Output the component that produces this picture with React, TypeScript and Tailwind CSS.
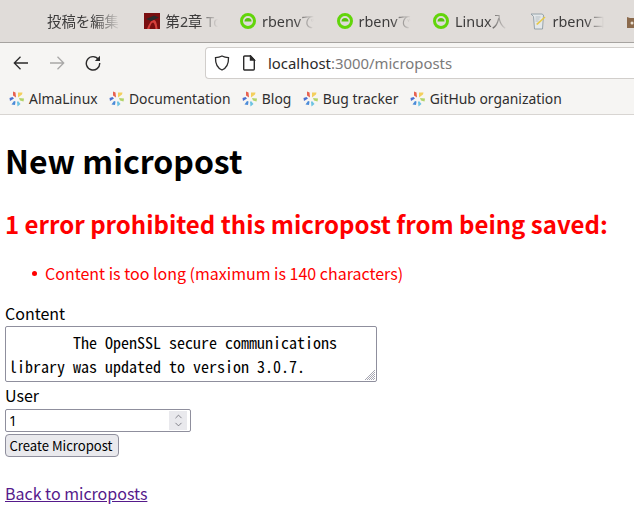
import { ChevronUp, ChevronDown } from 'lucide-react'

const uiFont = "font-['Noto_Sans','Noto_Sans_CJK_JP',sans-serif]"

function Ring() {
  return (
    <svg width="16" height="16" viewBox="0 0 16 16" className="shrink-0">
      <circle cx="8" cy="8" r="6.500" fill="none" stroke="#62d50a" strokeWidth="3" />
      <path d="M4.500 8.500a3.500 3.500 0 0 1 7 0z" fill="#56c40c" />
    </svg>
  )
}

function CapIcon() {
  return (
    <svg width="16" height="16" viewBox="0 0 16 16" className="shrink-0">
      <rect width="16" height="16" fill="#7a0f10" />
      <path d="M3 16C5 11 7 7 10 7c2 0 3 4 3.500 9h-2C11 12 10 9.500 9 9.500 7.500 9.500 6 13 5.500 16z" fill="#d6403c" />
      <path d="M2 6l8-3.500 5 2-8 3.500z" fill="#2c2a2a" />
    </svg>
  )
}

function NoteIcon() {
  return (
    <svg width="17" height="17" viewBox="0 0 17 17" className="shrink-0">
      <path d="M1 1h11l1.500 1-1 14H4.500L3.500 3.500z" fill="#e4e8ea" stroke="#8d9ba3" strokeWidth="0.9" />
      <path d="M6 11l8.500-7.500 1 1L7.500 12z" fill="#e7c94a" />
      <path d="M5.500 4h5M5.500 6h4M5.500 8h3" stroke="#a9b4ba" strokeWidth="0.8" />
    </svg>
  )
}

function BearIcon() {
  return (
    <svg width="16" height="16" viewBox="0 0 16 16" className="shrink-0">
      <path d="M1 3l3 1h5l3-1 1 3 2 3v5H1z" fill="#8b6a4c" />
      <circle cx="6" cy="9" r="1.500" fill="#e8ddcf" />
    </svg>
  )
}

function AlmaIcon() {
  return (
    <svg width="16" height="16" viewBox="0 0 16 16" className="shrink-0">
      <path d="M4 .5l2.500 1L7 6.500 4 4.500z" fill="#e8614f" />
      <path d="M9 1.500h4.500L13 3.500 9 6.500z" fill="#f4cf5c" />
      <path d="M10 7l5 .5-.5 3-3.500-1z" fill="#b3d46a" />
      <path d="M9 10l2.500 3-3 2.500L8 11z" fill="#6cc3e2" />
      <path d="M6.500 10.500L6 14l-3.500-.5L5 10z" fill="#4b8bd8" />
      <path d="M5 7.500L1 10 .5 7l3-1z" fill="#4a6fd0" />
    </svg>
  )
}

function BackIcon({ className }: { className?: string }) {
  return (
    <svg width="16" height="16" viewBox="0 0 16 16" fill="none" stroke="currentColor" strokeWidth="1.300" className={className}>
      <path d="M15 8H1.500M7.500 1.800L1.300 8l6.200 6.200" />
    </svg>
  )
}

function ForwardIcon({ className }: { className?: string }) {
  return (
    <svg width="16" height="16" viewBox="0 0 16 16" fill="none" stroke="currentColor" strokeWidth="1.300" className={className}>
      <path d="M1 8h13.500M8.500 1.800L14.700 8l-6.200 6.200" />
    </svg>
  )
}

function ReloadIcon({ className }: { className?: string }) {
  return (
    <svg width="16" height="16" viewBox="0 0 16 16" fill="none" className={className}>
      <path d="M13.500 4.500A6.700 6.700 0 1 0 14.700 8" stroke="currentColor" strokeWidth="1.400" />
      <path d="M15 .8V6H9.800z" fill="currentColor" />
    </svg>
  )
}

function ShieldIcon() {
  return (
    <svg width="16" height="16" viewBox="0 0 16 16" fill="none" stroke="currentColor" strokeWidth="1.300" className="shrink-0">
      <path d="M8 1c2 1 4 1.500 6.500 1.700C14.700 9 12.500 13 8 15 3.500 13 1.300 9 1.500 2.700 4 2.500 6 2 8 1z" />
    </svg>
  )
}

function PageIcon() {
  return (
    <svg width="14" height="16" viewBox="0 0 14 16" fill="none" stroke="currentColor" strokeWidth="1.400" className="ml-[12px] shrink-0">
      <path d="M2.700 1h5.800L12.300 5v9a1 1 0 0 1-1 1H2.700a1 1 0 0 1-1-1V2a1 1 0 0 1 1-1z" />
      <path d="M8.500 1v4h3.800z" fill="currentColor" />
    </svg>
  )
}

function Tab({ icon, title }: { icon?: React.ReactNode; title: string }) {
  return (
    <div className="flex items-center gap-[6px] shrink-0 w-[74px]">
      {icon}
      <span className="flex-1 overflow-hidden whitespace-nowrap text-[14.400px] text-[#3d3c3c] [mask-image:linear-gradient(to_right,black_62%,transparent_100%)]">
        {title}
      </span>
    </div>
  )
}

function Bookmark({ title }: { title: string }) {
  return (
    <div className="flex items-center gap-[4px] whitespace-nowrap">
      <AlmaIcon />
      <span>{title}</span>
    </div>
  )
}

export default function App() {
  return (
    <div className="w-[634px] h-[514px] overflow-hidden bg-white font-['Noto_Sans_CJK_JP',sans-serif] text-black">
      <div className={`${uiFont} h-[43px] bg-[#e0dcd9] border-b border-[#a6a3a0] flex items-center pl-[47px] pt-[1px] gap-[22.500px] overflow-hidden`}>
        <Tab title="投稿を編集" />
        <Tab icon={<CapIcon />} title="第2章 Toy" />
        <Tab icon={<Ring />} title="rbenvでイ" />
        <Tab icon={<Ring />} title="rbenvでイ" />
        <Tab icon={<Ring />} title="Linux入門" />
        <Tab icon={<NoteIcon />} title="rbenvコマ" />
        <Tab icon={<BearIcon />} title="" />
      </div>

      <div className={`${uiFont} h-[40px] bg-[#f6f5f3] flex items-center pl-[13px] text-[#2b2a2a]`}>
        <BackIcon />
        <ForwardIcon className="ml-[20px] text-[#a9a8a7]" />
        <ReloadIcon className="ml-[20px]" />
        <div className="ml-[104px] flex-1 h-[32px] bg-white border border-[#d1cecb] border-r-0 rounded-l-[4px] flex items-center pl-[8px] text-[14.900px]">
          <ShieldIcon />
          <PageIcon />
          <span className="ml-[12px]">
            localhost<span className="text-[#7b7a7a]">:3000/microposts</span>
          </span>
        </div>
      </div>

      <div className={`${uiFont} h-[32px] pt-[1px] bg-[#f6f5f3] border-b border-[#d8d5d2] flex items-center pl-[9px] gap-[11.300px] text-[13.900px] text-[#2f2e2e]`}>
        <Bookmark title="AlmaLinux" />
        <Bookmark title="Documentation" />
        <Bookmark title="Blog" />
        <Bookmark title="Bug tracker" />
        <Bookmark title="GitHub organization" />
      </div>

      <div className="pl-[5px] pt-[22px] text-[16px] leading-[24px]">
        <h1 className="text-[32px] leading-[47px] font-bold">New micropost</h1>
        <h2 className="mt-[22px] text-[24px] leading-[35px] font-bold text-[#ff0000]">
          1 error prohibited this micropost from being saved:
        </h2>
        <ul className="mt-[20px] pl-[27px] text-[#ff0000]">
          <li className="flex items-center gap-[8px]">
            <span className="w-[5px] h-[5px] rounded-full bg-[#ff0000]" />
            <span>Content is too long (maximum is 140 characters)</span>
          </li>
        </ul>
        <form className="mt-[16px]">
          <div>
            <label className="block h-[25px]">Content</label>
            <div className="relative w-[372px] h-[56px] border border-[#8f8f9d] rounded-[2px] px-[3px] pt-[3px] font-['Noto_Sans_Mono_CJK_JP','DejaVu_Sans_Mono',monospace] text-[16px] leading-[24px] whitespace-pre overflow-hidden">
              {'        The OpenSSL secure communications\nlibrary was updated to version 3.0.7.'}
              <svg width="12" height="12" viewBox="0 0 12 12" className="absolute right-0 bottom-0">
                <path d="M11 1L1 11M11 3L3 11M11 5L5 11M11 7L7 11M11 9L9 11" stroke="#8f8f9d" strokeWidth="0.800" />
              </svg>
            </div>
          </div>
          <div>
            <label className="block h-[27px] pt-[1px]">User</label>
            <div className="relative w-[186px] h-[23px] border border-[#8f8f9d] rounded-[2px] pl-[3px] text-[14px] leading-[21px] font-['Noto_Sans',sans-serif]">
              1
              <div className="absolute right-[3px] top-[1px] w-[18px] h-[19px] bg-[#e9e9ed] flex flex-col items-center justify-center text-[#5f5f68]">
                <ChevronUp size={13} strokeWidth={1.600} className="-mb-[3px]" />
                <ChevronDown size={13} strokeWidth={1.600} />
              </div>
            </div>
          </div>
          <button
            type="button"
            className="block mt-[2px] w-[114px] h-[23px] pr-[2px] border border-[#8f8f9d] rounded-[4px] bg-[#e9e9ed] text-[13.100px] leading-[21px] text-center text-black"
          >
            Create Micropost
          </button>
        </form>
        <a href="#" className="block mt-[24px] w-fit text-[#551a8b] underline">
          Back to microposts
        </a>
      </div>
    </div>
  )
}
